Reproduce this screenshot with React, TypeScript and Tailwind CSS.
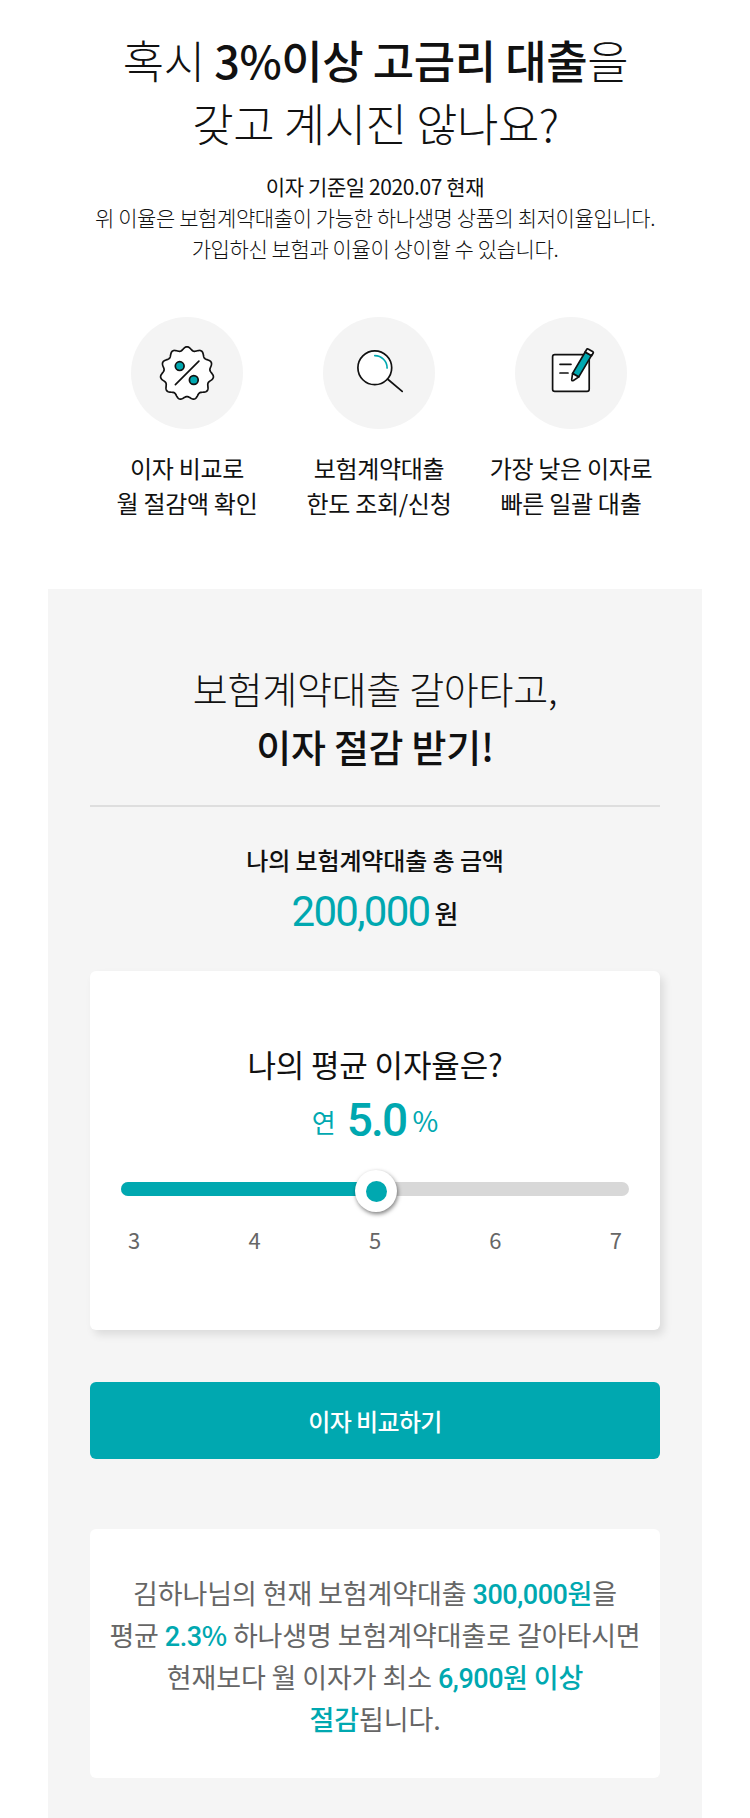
import type { ReactNode } from 'react';

const TEAL = '#00a8b0';
const INK = '#111111';

// Wavy seal outline with eleven lobes.
const sealPath =
  Array.from({ length: 221 }, (_, i) => {
    const a = (i / 220) * Math.PI * 2;
    const r = 24.9 + 1.75 * Math.cos(11 * a);
    const x = 56 + r * Math.sin(a);
    const y = 56.4 - r * Math.cos(a);
    return `${i === 0 ? 'M' : 'L'}${x.toFixed(2)} ${y.toFixed(2)}`;
  }).join('') + 'Z';

function Disc({ children }: { children: ReactNode }) {
  return (
    <div className="size-28 rounded-full bg-[#f4f4f4]">
      <svg
        viewBox="0 0 112 112"
        className="size-28"
        fill="none"
        stroke={INK}
        strokeWidth="1.7"
        strokeLinecap="round"
        strokeLinejoin="round"
      >
        {children}
      </svg>
    </div>
  );
}

function SealIcon() {
  return (
    <Disc>
      <path d={sealPath} fill="#fff" />
      <path d="M44.4 67.6 67.9 44.2" />
      <circle cx="48.7" cy="49.1" r="4.4" fill={TEAL} />
      <circle cx="62.8" cy="63" r="4.4" fill={TEAL} />
    </Disc>
  );
}

function SearchIcon() {
  return (
    <Disc>
      <circle cx="51.8" cy="50.8" r="16.9" fill="#fff" />
      <path d="M64.5 62 79.2 74.4" />
      <path d="M51.8 38.6a12.3 12.3 0 0 1 12.3 12.4" stroke={TEAL} />
    </Disc>
  );
}

function NoteIcon() {
  return (
    <Disc>
      <rect x="37.6" y="37.6" width="36.6" height="36.8" rx="2.2" fill="#fff" />
      <path d="M45 47.3H56M45 56H53" />
      <path d="M57.6 56.4 70.2 35 76.4 38.6 63.8 59.9Z" fill={TEAL} />
      <path d="M70.2 35 71.8 32.3Q72.3 31.5 73.1 32L78 34.8Q78.6 35.3 78.2 36L76.6 38.7Z" fill="#fff" />
      <path d="M57.6 56.4 63.8 59.9 58.4 63.5Q56.7 64.3 56.7 62.6Z" fill="#fff" />
    </Disc>
  );
}

const steps = [
  { icon: <SealIcon />, lines: ['이자 비교로', '월 절감액 확인'] },
  { icon: <SearchIcon />, lines: ['보험계약대출', '한도 조회/신청'] },
  { icon: <NoteIcon />, lines: ['가장 낮은 이자로', '빠른 일괄 대출'] },
];

function Em({ children }: { children: ReactNode }) {
  return <em className="font-medium text-[#00a8b0] not-italic">{children}</em>;
}

function Num({ children }: { children: ReactNode }) {
  return <span className="font-[Roboto] leading-none tracking-[-0.45px]">{children}</span>;
}

export default function App() {
  return (
    <main className="flex h-[1818px] w-[750px] flex-col items-center overflow-hidden bg-white font-['Noto_Sans_CJK_KR',sans-serif] text-center whitespace-nowrap text-[#111]">
      <h1 className="mt-[28px] pl-px text-[45px] leading-[63px] font-light tracking-[-0.45px]">
        혹시 <b className="font-medium">3%이상 고금리 대출</b>을
        <br />
        갖고 계시진 않나요?
      </h1>

      <div className="mt-[17px] text-[21px] leading-[31px] font-light tracking-[-0.4px]">
        <p className="font-normal">이자 기준일 2020.07 현재</p>
        <p>위 이율은 보험계약대출이 가능한 하나생명 상품의 최저이율입니다.</p>
        <p>가입하신 보험과 이율이 상이할 수 있습니다.</p>
      </div>

      <ul className="mt-[53px] grid grid-cols-[192px_192px_192px] pl-[8px]">
        {steps.map((s) => (
          <li key={s.lines[0]} className="flex flex-col items-center">
            {s.icon}
            <p className="mt-[21px] text-[24px] leading-[35px] tracking-[-0.3px]">
              {s.lines[0]}
              <br />
              {s.lines[1]}
            </p>
          </li>
        ))}
      </ul>

      <section className="mt-[69px] flex h-[1229px] w-[654px] shrink-0 flex-col bg-[#f5f5f5] px-[42px]">
        <h2 className="mt-[70px] text-[38px] leading-[57.5px] font-light tracking-[-0.25px]">
          보험계약대출 갈아타고,
          <br />
          <b className="font-medium">이자 절감 받기!</b>
        </h2>
        <hr className="mt-[31px] border-0 border-t-2 border-[#dedede]" />

        <p className="mt-[35px] text-[24px] leading-[35px] font-medium tracking-[-0.1px]">나의 보험계약대출 총 금액</p>
        <p className="flex h-[65px] items-end justify-center gap-[5px] leading-none">
          <span className="mb-[9px] font-[Roboto] text-[42px] leading-none tracking-[-1.7px] text-[#00a8b0]">
            200,000
          </span>
          <span className="mb-[16px] text-[26px] leading-none font-medium">원</span>
        </p>

        <div className="mt-[29px] flex h-[359px] flex-col rounded-md bg-white px-[31px] shadow-[4px_5px_9px_rgba(0,0,0,0.10)]">
          <p className="mt-[70px] text-[31px] leading-[46px] tracking-[-0.15px]">나의 평균 이자율은?</p>
          <p className="flex h-[64px] items-end justify-center leading-none text-[#00a8b0]">
            <span className="mb-[16px] text-[26px] leading-none">연</span>
            <span className="mb-[8px] ml-[11px] font-[Roboto] text-[46px] leading-none font-medium tracking-[-1.8px]">
              5.0
            </span>
            <span className="mb-[17px] ml-[6px] text-[28px] leading-none">%</span>
          </p>
          <div className="relative mt-[31px] h-[14px] rounded-[7px] bg-[#d8d8d8]">
            <div className="h-full w-1/2 rounded-l-[7px] bg-[#00a8b0]" />
            <div className="absolute top-[-12px] left-[234px] flex size-[42px] items-center justify-center rounded-full bg-white shadow-[1px_2px_4px_rgba(0,0,0,0.5)]">
              <div className="size-[21px] rounded-full bg-[#00a8b0]" />
            </div>
          </div>
          <div className="mt-[27px] flex justify-between px-[7px] text-[22px] leading-8 text-[#666]">
            {[3, 4, 5, 6, 7].map((n) => (
              <span key={n}>{n}</span>
            ))}
          </div>
        </div>

        <button className="mt-[52px] h-[77px] rounded-md bg-[#00a8b0] pt-px text-[24px] font-medium tracking-[-0.6px] text-white">
          이자 비교하기
        </button>

        <div className="mt-[70px] h-[249px] rounded-md bg-white pt-[43px] text-[27px] leading-[42px] tracking-[-0.1px] text-[#666]">
          <p>
            김하나님의 현재 보험계약대출{' '}
            <Em>
              <Num>300,000</Num>원
            </Em>
            을
          </p>
          <p>
            평균{' '}
            <Em>
              <Num>2.3</Num>%
            </Em>{' '}
            하나생명 보험계약대출로 갈아타시면
          </p>
          <p>
            현재보다 월 이자가 최소{' '}
            <Em>
              <Num>6,900</Num>원 이상
            </Em>
          </p>
          <p>
            <Em>절감</Em>됩니다.
          </p>
        </div>
      </section>
    </main>
  );
}
